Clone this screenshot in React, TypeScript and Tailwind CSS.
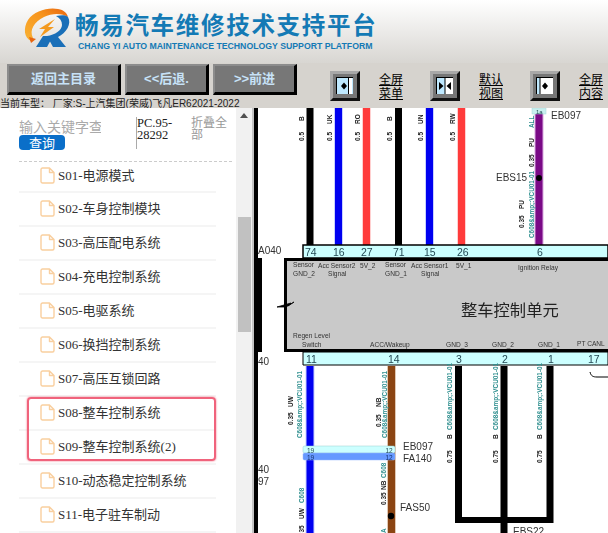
const serif = 'font-["Liberation_Serif","Noto_Sans_CJK_SC",serif]';

const chapters = [
  'S01-电源模式',
  'S02-车身控制模块',
  'S03-高压配电系统',
  'S04-充电控制系统',
  'S05-电驱系统',
  'S06-换挡控制系统',
  'S07-高压互锁回路',
  'S08-整车控制系统',
  'S09-整车控制系统(2)',
  'S10-动态稳定控制系统',
  'S11-电子驻车制动',
];

function Logo() {
  return (
    <svg width="50" height="44" viewBox="22 7 50 44" className="shrink-0">
      <defs>
        <linearGradient id="swoosh" x1="0" y1="1" x2="1" y2="0">
          <stop offset="0" stopColor="#f9b233" />
          <stop offset="0.6" stopColor="#f7941d" />
          <stop offset="1" stopColor="#e8650f" />
        </linearGradient>
      </defs>
      <path d="M31 41C24 38 23 28 28 20C34 11 48 7 58 9C64 10 67 13 68 17C62 13 52 13 44 17C34 22 29 30 33 38Z" fill="url(#swoosh)" />
      <path d="M29 37L36 39L31 43Z" fill="#e8650f" />
      <path d="M55 19L48 27L54 27L40 37L45 29L39 29Z" fill="#f39a1f" />
      <path d="M36 47L43 36L53 36L47 47Z" fill="#1a6fb8" />
      <path d="M68 17C72 24 66 33 58 37L66 47L53 47L47 36C55 35 62 30 62 25C62 21 60 18 56 16C62 15 66 15 68 17Z" fill="#1a6fb8" />
    </svg>
  );
}

function NavButton({ label, width }: { label: string; width: string }) {
  return (
    <button className={`${width} h-[31px] bg-[#777777] border-t-2 border-l-2 border-t-[#8c8c8c] border-l-[#8c8c8c] border-r-[3px] border-b-[3px] border-r-black border-b-black text-[13px] font-bold text-[#c7e2f7] font-["Liberation_Sans","Noto_Sans_CJK_SC",sans-serif]`}>
      {label}
    </button>
  );
}

function PaneIcon({ mode }: { mode: 'left' | 'both' | 'right' }) {
  return (
    <svg width="30" height="30" viewBox="0 0 30 30" className="shrink-0">
      <rect width="30" height="30" fill="#808080" />
      <path d="M0 0H30L27 3H3V27L0 30Z" fill="#a8a8a8" />
      <path d="M30 0V30H0L3 27H27V3Z" fill="#111111" />
      <rect x="3" y="3" width="24" height="24" fill="#777777" />
      <rect x="6" y="6" width="17" height="17" fill="#000000" />
      <rect x="7" y="7" width="16" height="16" fill="#bfe9ff" />
      {mode === 'left' && (
        <>
          <rect x="19" y="7" width="3" height="16" fill="#ffffff" />
          <rect x="18" y="7" width="1" height="16" fill="#000000" />
          <path d="M11 15L14 11.5V18.5Z M17 15L14 11.5V18.5Z" fill="#000000" />
        </>
      )}
      {mode === 'both' && (
        <>
          <rect x="15" y="7" width="8" height="16" fill="#ffffff" />
          <rect x="14.5" y="7" width="1" height="16" fill="#000000" />
          <path d="M13.5 15L9 11V19Z M16.5 15L21 11V19Z" fill="#000000" />
        </>
      )}
      {mode === 'right' && (
        <>
          <rect x="10" y="7" width="13" height="16" fill="#ffffff" />
          <rect x="9.5" y="7" width="1" height="16" fill="#000000" />
          <path d="M12 15L15 11.5V18.5Z M18 15L15 11.5V18.5Z" fill="#000000" />
        </>
      )}
    </svg>
  );
}

function PaneToggle({ mode, lines }: { mode: 'left' | 'both' | 'right'; lines: [string, string] }) {
  return (
    <div className="w-[100px] flex items-center gap-[19px] shrink-0">
      <PaneIcon mode={mode} />
      <a className="block text-[12px] leading-[14.5px] text-black underline font-['Noto_Sans_CJK_SC',sans-serif] w-6">
        <span className="block">{lines[0]}</span>
        <span className="block">{lines[1]}</span>
      </a>
    </div>
  );
}

function FileIcon() {
  return (
    <svg width="15" height="17" viewBox="0 0 15 17" fill="none" className="shrink-0">
      <path d="M2.5 1H9.5L14 5.5V14.5C14 15.3 13.3 16 12.5 16H2.5C1.7 16 1 15.3 1 14.5V2.5C1 1.7 1.7 1 2.5 1Z M9.5 1V5.5H14" stroke="#f9cf9f" strokeWidth="1.4" strokeLinejoin="round" />
    </svg>
  );
}

// text turned 90deg, reading bottom to top; y is the bottom end
function VText({ x, y, children, teal }: { x: number; y: number; children: string; teal?: boolean }) {
  return (
    <text
      x={x}
      y={y}
      transform={`rotate(-90 ${x} ${y})`}
      fontSize={teal ? 6.4 : 6.5}
      fontWeight="bold"
      fill={teal ? '#2f8f8f' : '#222222'}
    >
      {children}
    </text>
  );
}

function Wire({ x, y1, y2, color, edge }: { x: number; y1: number; y2: number; color: string; edge?: string }) {
  return (
    <>
      {edge && <rect x={x - 4.5} y={y1} width="9" height={y2 - y1} fill={edge} />}
      <rect x={x - 3.5} y={y1} width="7" height={y2 - y1} fill={color} />
    </>
  );
}

function Diagram() {
  const pinLabel = '#234a55';
  const boxText = '#333333';
  const tiny = (x: number, y: number, s: string) => (
    <text x={x} y={y} fontSize="6.6" fill={boxText}>
      {s}
    </text>
  );
  const num = (x: number, y: number, s: string) => (
    <text x={x} y={y} fontSize="10.5" fill={pinLabel}>
      {s}
    </text>
  );
  const tag = (x: number, y: number, s: string) => (
    <text x={x} y={y} fontSize="10" fill="#333333">
      {s}
    </text>
  );

  return (
    <svg
      viewBox="252 108 356 425"
      width="356"
      height="425"
      className="block blur-[0.3px] font-['Liberation_Sans','Noto_Sans_CJK_SC',sans-serif]"
    >
      <rect x="252" y="108" width="356" height="425" fill="#ffffff" />
      <rect x="252" y="108" width="2" height="425" fill="#c4c4c4" />
      <rect x="254" y="108" width="4" height="425" fill="#000000" />

      {/* wires above the unit */}
      <Wire x={310} y1={108} y2={245} color="#000000" />
      <Wire x={338.5} y1={108} y2={245} color="#0000f0" edge="#c8d0ff" />
      <Wire x={366.5} y1={108} y2={245} color="#ff3b3b" edge="#ffd0d0" />
      <Wire x={398.5} y1={108} y2={245} color="#000000" />
      <Wire x={429.5} y1={108} y2={245} color="#0000f0" edge="#c8d0ff" />
      <Wire x={461.5} y1={108} y2={245} color="#ff3b3b" edge="#ffd0d0" />
      <Wire x={539} y1={112} y2={245} color="#7a0a86" edge="#d9a8e0" />

      <VText x={304} y={121}>B</VText>
      <VText x={304} y={141}>0.5</VText>
      <VText x={332} y={124}>UK</VText>
      <VText x={332} y={141}>0.5</VText>
      <VText x={360} y={124}>RO</VText>
      <VText x={360} y={141}>0.5</VText>
      <VText x={392} y={121}>B</VText>
      <VText x={392} y={141}>0.5</VText>
      <VText x={423} y={124}>UN</VText>
      <VText x={423} y={141}>0.5</VText>
      <VText x={455} y={124}>RW</VText>
      <VText x={455} y={141}>0.5</VText>

      <rect x="532" y="108" width="14" height="6" fill="#c8efef" stroke="#a5d5d5" strokeWidth="0.5" />
      <text x="536" y="113.5" fontSize="6" fill="#234a55">1a</text>
      {tag(551, 119, 'EB097')}
      <VText x={534} y={128} teal>ALL</VText>
      <VText x={534} y={147}>PU</VText>
      <VText x={534} y={167}>0.35</VText>
      <VText x={534} y={238} teal>C608&amp;amp;:VCU01-01</VText>
      <VText x={524} y={209}>PU</VText>
      <VText x={524} y={228}>0.35</VText>
      {tag(496, 181, 'EBS15')}
      <circle cx="539" cy="178" r="3" fill="#000000" />

      <rect x="258" y="258" width="4" height="94" fill="#000000" />

      {/* connector strips and unit body */}
      <path d="M303 258V245H608V258Z" fill="#ccffff" stroke="#000000" strokeWidth="1.5" />
      <path d="M303 352V365H608V352Z" fill="#ccffff" stroke="#000000" strokeWidth="1" />
      <rect x="285.5" y="259.5" width="330" height="91" fill="#c9c9c9" stroke="#000000" strokeWidth="3" />
      <path d="M277 307L291 303L288 306L294 302L286 307Z" fill="#000000" stroke="#000000" strokeWidth="0.8" />

      {num(305, 256, '74')}
      {num(333, 256, '16')}
      {num(361, 256, '27')}
      {num(393, 256, '71')}
      {num(424, 256, '15')}
      {num(457, 256, '26')}
      {num(537, 256, '6')}
      {num(306, 363, '11')}
      {num(388, 363, '14')}
      {num(456, 363, '3')}
      {num(502, 363, '2')}
      {num(548, 363, '1')}
      {num(588, 363, '17')}

      {tiny(293, 267, 'Sensor')}
      {tiny(293, 276, 'GND_2')}
      {tiny(318, 268, 'Acc Sensor2')}
      {tiny(328, 276, 'Signal')}
      {tiny(360, 268, '5V_2')}
      {tiny(385, 267, 'Sensor')}
      {tiny(385, 276, 'GND_1')}
      {tiny(411, 268, 'Acc Sensor1')}
      {tiny(421, 276, 'Signal')}
      {tiny(456, 268, '5V_1')}
      {tiny(518, 270, 'Ignition Relay')}
      {tiny(293, 338, 'Regen Level')}
      {tiny(302, 347, 'Switch')}
      {tiny(370, 347, 'ACC/Wakeup')}
      {tiny(446, 347, 'GND_3')}
      {tiny(492, 347, 'GND_2')}
      {tiny(538, 347, 'GND_1')}
      {tiny(577, 346, 'PT CANL')}
      <text x="461" y="316" fontSize="16.3" fill="#222222">整车控制单元</text>

      {/* wires below the unit */}
      <Wire x={310} y1={366} y2={533} color="#0000f0" edge="#c8d0ff" />
      <Wire x={391.5} y1={366} y2={533} color="#8b4513" edge="#e0c8b4" />
      <Wire x={458.5} y1={366} y2={523} color="#000000" />
      <Wire x={504} y1={366} y2={533} color="#000000" />
      <Wire x={550} y1={366} y2={523} color="#000000" />
      <rect x="455" y="517" width="98" height="6" fill="#000000" />
      <path d="M590 372C591 376 593 377 597 377H608" fill="none" stroke="#000000" strokeWidth="1" />

      <rect x="303" y="446" width="92" height="7" rx="1.5" fill="#ccffff" stroke="#9cc" strokeWidth="0.5" />
      <rect x="303" y="453" width="92" height="7" rx="1.5" fill="#6699ff" stroke="#9bf" strokeWidth="0.5" />
      <text x="307" y="452.5" fontSize="6.5" fill="#234a55">19</text>
      <text x="307" y="459.5" fontSize="6.5" fill="#14306a">19</text>
      <text x="389" y="452.5" fontSize="6.5" fill="#234a55" textAnchor="middle">12</text>
      <text x="389" y="459.5" fontSize="6.5" fill="#14306a" textAnchor="middle">12</text>

      <VText x={302} y={438} teal>C608&amp;amp;:VCU01-01</VText>
      <VText x={293} y={407}>UW</VText>
      <VText x={293} y={425}>0.35</VText>
      <VText x={387} y={438} teal>C608&amp;amp;:VCU01-01</VText>
      <VText x={381} y={407}>NB</VText>
      <VText x={381} y={427}>0.35</VText>
      <VText x={386} y={478} teal>C608</VText>
      <VText x={386} y={490}>NB</VText>
      <VText x={386} y={505}>0.35</VText>
      <VText x={386} y={533} teal>A</VText>
      <VText x={304} y={503} teal>C608</VText>
      <VText x={304} y={519}>UW</VText>
      <VText x={304} y={538}>0.35</VText>
      {[452, 498, 542].map((x) => (
        <g key={x}>
          <VText x={x} y={430} teal>C608&amp;amp;:VCU01-01</VText>
          <VText x={x} y={439}>B</VText>
          <VText x={x} y={463}>0.75</VText>
        </g>
      ))}

      {tag(403, 450, 'EB097')}
      {tag(403, 462, 'FA140')}
      {tag(400, 511, 'FAS50')}
      <circle cx="391" cy="516" r="3.2" fill="#000000" />
      {tag(513, 535, 'EBS22')}
      {tag(258, 254, 'A040')}
      {tag(258, 365, '40')}
      {tag(258, 473, '40')}
      {tag(258, 485, '97')}
    </svg>
  );
}

export default function App() {
  return (
    <div className="w-[608px] h-[533px] overflow-hidden bg-white flex flex-col">
      <header className="h-[63px] shrink-0 flex bg-gradient-to-b from-[#ffffff] to-[#d8d6d2] pl-[22px] pt-[7px]">
        <Logo />
        <div className="ml-[3px] pt-[3px]">
          <h1 className="text-[23.5px] leading-[29px] tracking-[1.7px] font-bold text-[#147ab5] whitespace-nowrap font-['Noto_Sans_CJK_SC',sans-serif]">
            畅易汽车维修技术支持平台
          </h1>
          <p className="text-[8.72px] leading-[11px] ml-[3px] mt-[2px] font-bold text-[#147ab5] whitespace-nowrap font-['Liberation_Sans',sans-serif]">
            CHANG YI AUTO MAINTENANCE TECHNOLOGY SUPPORT PLATFORM
          </p>
        </div>
      </header>

      <div className="h-[45px] shrink-0 bg-[#d6d3ce] flex">
        <div className="w-[330px] shrink-0 pt-px">
          <div className="flex gap-1 pl-[7px]">
            <NavButton label="返回主目录" width="w-[114px]" />
            <NavButton label="<<后退." width="w-[84px]" />
            <NavButton label=">>前进" width="w-[84px]" />
          </div>
          <p className="h-[11px] mt-[2px] text-[10px] leading-[13px] text-[#222222] whitespace-nowrap overflow-hidden font-['Liberation_Sans','Noto_Sans_CJK_SC',sans-serif]">
            当前车型： 厂家:S-上汽集团(荣威)飞凡ER62021-2022
          </p>
        </div>
        <div className="flex items-start pt-2">
          <PaneToggle mode="left" lines={['全屏', '菜单']} />
          <PaneToggle mode="both" lines={['默认', '视图']} />
          <PaneToggle mode="right" lines={['全屏', '内容']} />
        </div>
      </div>

      <div className="flex-1 min-h-0 flex">
        <aside className="w-[236px] shrink-0 overflow-hidden relative">
          <div className="flex h-[53px] pl-[19px] pt-[10px]">
            <div className="w-[117px] shrink-0">
              <div className={`w-[82px] h-[17px] overflow-hidden text-[14px] leading-[20px] whitespace-nowrap text-[#aaaaaa] ${serif}`}>
                输入关键字查询
              </div>
              <button className="block w-[46px] h-[15px] rounded bg-[#0a6fc9] text-white text-[13px] leading-[15px] font-['Noto_Sans_CJK_SC',sans-serif]">
                查询
              </button>
            </div>
            <div className={`w-[55px] shrink-0 h-[32px] -mt-px border-l border-[#aaaaaa] text-[12.5px] leading-[12px] text-[#222222] ${serif}`}>
              PC.95-
              <br />
              28292
            </div>
            <div className={`w-[37px] -mt-px text-[12px] leading-[12px] text-[#999999] ${serif}`}>
              折叠全部
            </div>
          </div>
          <div className="ml-[19px] mr-[4px] border-t border-dashed border-[#cccccc]" />
          <ul className="pl-[19px] pr-[20px]">
            {chapters.map((name) => (
              <li key={name} className="h-[34px] pt-[7px] first:h-[31px] first:pt-[5px] flex items-start gap-[3px] pl-[21px] border-b-2 border-[#f5f5f5]">
                <FileIcon />
                <span className={`text-[13px] leading-[17px] text-[#333333] whitespace-nowrap ${serif}`}>{name}</span>
              </li>
            ))}
          </ul>
          <div className="absolute left-[27px] top-[289px] w-[189px] h-[64px] rounded border-2 border-[#f0637c] shadow-[0_0_2px_#f0637c]" />
        </aside>

        <div className="w-[16px] shrink-0 bg-[#f1f1f1] flex flex-col items-center">
          <div className="mt-[5px] w-0 h-0 border-x-[4px] border-x-transparent border-b-[5px] border-b-[#505050]" />
          <div className="mt-[99px] w-[13px] h-[115px] bg-[#c1c1c1]" />
        </div>

        <Diagram />
      </div>
    </div>
  );
}
